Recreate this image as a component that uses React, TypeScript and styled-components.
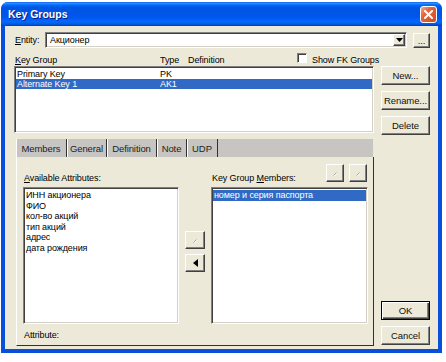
import React from "react";
import styled, { createGlobalStyle, css } from "styled-components";

const FONT = `"Liberation Sans", Arial, sans-serif`;

const Global = createGlobalStyle`
  html, body { margin: 0; padding: 0; background: #fff; }
  body { font-family: ${FONT}; font-size: 9px; letter-spacing: -0.1px; color: #000; }
  * { box-sizing: border-box; }
`;

const Window = styled.div`
  margin: 2px 0 0 1px;
  width: 441px;
  height: 351px;
  background: #0A4FDA;
  border-radius: 7px 7px 0 0;
  padding: 0 4px 4px;
  display: flex;
  flex-direction: column;
`;

const TitleBar = styled.div`
  margin: 0 -4px;
  height: 24px;
  flex: none;
  border-radius: 7px 7px 0 0;
  background: linear-gradient(to bottom, #0058EE 0%, #3593FF 5%, #127DFF 9%, #036FFC 12%, #0262EE 16%, #0057E5 22%, #0054E3 30%, #0055EB 60%, #005BF5 70%, #026AFE 80%, #0062EF 88%, #0052D6 94%, #0040AB 100%);
  display: flex;
  align-items: center;
  justify-content: space-between;
  padding: 0 5px 0 7px;
`;

const TitleText = styled.span`
  font-family: ${FONT};
  font-weight: bold;
  font-size: 10.5px;
  letter-spacing: 0;
  color: #fff;
  text-shadow: 1px 1px #0A1F80;
`;

const CloseBtn = styled.div`
  width: 17px;
  height: 17px;
  border: 1px solid #fff;
  border-radius: 3px;
  background: linear-gradient(135deg, #F4A88C 0%, #E5643C 35%, #D24C22 100%);
  display: flex;
  align-items: center;
  justify-content: center;
`;

const Body = styled.div`
  flex: 1;
  background: #ECE9D8;
  display: flex;
  flex-direction: column;
`;

const EntityRow = styled.div`
  margin-top: 6px;
  height: 16px;
  display: flex;
  align-items: center;
  padding-left: 10px;
`;

const Label = styled.span<{ $w?: number }>`
  display: inline-block;
  ${p => p.$w !== undefined && css`width: ${p.$w}px;`}
  white-space: nowrap;
`;

const Mn = styled.span`
  text-decoration: underline;
`;

const sunken = css`
  background: #fff;
  border: 1px solid;
  border-color: #808080 #fff #fff #808080;
  box-shadow: inset 1px 1px #404040, inset -1px -1px #D4D0C8;
  padding: 1px;
`;

const Combo = styled.div`
  ${sunken};
  width: 362px;
  height: 16px;
  display: flex;
  align-items: center;
  justify-content: space-between;
`;

const ComboText = styled.span`
  padding-left: 3px;
`;

const raised = css`
  background: #ECE9D8;
  border: 1px solid;
  border-color: #fff #404040 #404040 #fff;
  box-shadow: inset -1px -1px #808080;
`;

const ComboArrow = styled.div`
  ${raised};
  width: 12px;
  height: 12px;
  display: flex;
  align-items: center;
  justify-content: center;
`;

const Btn = styled.div<{ $w?: number; $h?: number; $default?: boolean }>`
  ${raised};
  width: ${p => p.$w ?? 49}px;
  height: ${p => p.$h ?? 19}px;
  flex: none;
  display: flex;
  align-items: center;
  justify-content: center;
  font-size: 9.5px;
  color: #111;
  ${p => p.$default && css`
    border-color: #000;
    box-shadow: inset 1px 1px #fff, inset -1px -1px #404040, inset -2px -2px #808080;
  `}
`;

const Main = styled.div`
  flex: 1;
  display: grid;
  grid-template-columns: 360px 49px;
  column-gap: 7px;
  padding: 5px 0 3px 9px;
`;

const LeftCol = styled.div`
  display: flex;
  flex-direction: column;
`;

const HeaderRow = styled.div`
  height: 13px;
  display: grid;
  grid-template-columns: 145px 28px 109px 15px auto;
  align-items: center;
  padding-left: 1px;
`;

const CheckBox = styled.div`
  width: 10px;
  height: 10px;
  margin-top: -3px;
  background: #fff;
  border: 1px solid;
  border-color: #808080 #fff #fff #808080;
  box-shadow: inset 1px 1px #404040;
`;

const KeyList = styled.div`
  ${sunken};
  height: 67px;
  padding-top: 2px;
`;

const KeyRow = styled.div<{ $sel?: boolean }>`
  height: 10px;
  line-height: 10px;
  display: grid;
  grid-template-columns: 143px auto;
  padding-left: 1px;
  background: ${p => (p.$sel ? "#316AC5" : "transparent")};
  color: ${p => (p.$sel ? "#fff" : "#000")};
`;

const TabStrip = styled.div`
  margin: 6px 0 0 2px;
  width: 357px;
  height: 18px;
  background: #C6C5C1;
  display: flex;
`;

const Tab = styled.div<{ $w: number }>`
  width: ${p => p.$w}px;
  height: 18px;
  display: flex;
  align-items: center;
  justify-content: center;
  border-right: 1px solid #303030;
  box-shadow: inset 1px 0 #fff;
  color: #222;
  font-size: 9.5px;
`;

const Panel = styled.div`
  margin-left: 2px;
  width: 358px;
  height: 189px;
  border-left: 1px solid #fff;
  border-right: 1px solid #303030;
  border-bottom: 1px solid #303030;
  display: grid;
  grid-template-columns: 156px 20px 157px;
  grid-template-rows: 23px 137px 1fr;
  column-gap: 6px;
  padding: 7px 5px 0 6px;
`;

const HeadCell = styled.div`
  display: flex;
  align-items: flex-end;
  justify-content: space-between;
  padding: 0 1px 4px 1px;
`;

const SmallBtns = styled.div`
  display: flex;
  gap: 5px;
  align-self: flex-start;
`;

const AttrList = styled.div`
  ${sunken};
  padding-top: 2px;
`;

const AttrItem = styled.div<{ $sel?: boolean }>`
  height: 10.6px;
  line-height: 10.6px;
  padding-left: 1px;
  white-space: nowrap;
  background: ${p => (p.$sel ? "#316AC5" : "transparent")};
  color: ${p => (p.$sel ? "#fff" : "#000")};
`;

const MidCol = styled.div`
  display: flex;
  flex-direction: column;
  justify-content: center;
  gap: 5px;
  padding-bottom: 8px;
`;

const AttrRow = styled.div`
  grid-column: 1 / -1;
  display: flex;
  align-items: center;
  padding-left: 1px;
`;

const RightCol = styled.div`
  display: flex;
  flex-direction: column;
  gap: 6px;
  padding-top: 13px;
  padding-bottom: 1px;
`;

const Spacer = styled.div`
  flex: 1;
`;

const Slash = () => (
  <svg width="8" height="8" viewBox="0 0 8 8">
    <line x1="2.5" y1="6.5" x2="5.5" y2="3.5" stroke="#A8A8A0" strokeWidth="1" />
    <line x1="3.5" y1="7" x2="6" y2="4.5" stroke="#fff" strokeWidth="1" />
  </svg>
);

export default function App() {
  return (
    <>
      <Global />
      <Window>
        <TitleBar>
          <TitleText>Key Groups</TitleText>
          <CloseBtn>
            <svg width="9" height="9" viewBox="0 0 9 9">
              <path d="M1 1 L8 8 M8 1 L1 8" stroke="#fff" strokeWidth="2" strokeLinecap="square" />
            </svg>
          </CloseBtn>
        </TitleBar>
        <Body>
          <EntityRow>
            <Label $w={30}><Mn>E</Mn>ntity:</Label>
            <Combo>
              <ComboText>Акционер</ComboText>
              <ComboArrow>
                <svg width="7" height="4" viewBox="0 0 7 4"><polygon points="0,0 7,0 3.5,4" fill="#000" /></svg>
              </ComboArrow>
            </Combo>
            <Btn $w={17} $h={15} style={{ marginLeft: 6 }}>...</Btn>
          </EntityRow>
          <Main>
            <LeftCol>
              <HeaderRow>
                <Label><Mn>K</Mn>ey Group</Label>
                <Label>Type</Label>
                <Label>Definition</Label>
                <CheckBox />
                <Label>Show FK Groups</Label>
              </HeaderRow>
              <KeyList>
                <KeyRow><span>Primary Key</span><span>PK</span></KeyRow>
                <KeyRow $sel><span>Alternate Key 1</span><span>AK1</span></KeyRow>
              </KeyList>
              <TabStrip>
                <Tab $w={51}>Members</Tab>
                <Tab $w={40}>General</Tab>
                <Tab $w={50}>Definition</Tab>
                <Tab $w={30}>Note</Tab>
                <Tab $w={31}>UDP</Tab>
              </TabStrip>
              <Panel>
                <HeadCell>
                  <Label><Mn>A</Mn>vailable Attributes:</Label>
                </HeadCell>
                <div />
                <HeadCell>
                  <Label>Key Group <Mn>M</Mn>embers:</Label>
                  <SmallBtns>
                    <Btn $w={18} $h={18}><Slash /></Btn>
                    <Btn $w={18} $h={18}><Slash /></Btn>
                  </SmallBtns>
                </HeadCell>
                <AttrList>
                  <AttrItem>ИНН акционера</AttrItem>
                  <AttrItem>ФИО</AttrItem>
                  <AttrItem>кол-во акций</AttrItem>
                  <AttrItem>тип акций</AttrItem>
                  <AttrItem>адрес</AttrItem>
                  <AttrItem>дата рождения</AttrItem>
                </AttrList>
                <MidCol>
                  <Btn $w={20} $h={18}><Slash /></Btn>
                  <Btn $w={20} $h={18}>
                    <svg width="5" height="8" viewBox="0 0 5 8"><polygon points="5,0 5,8 0,4" fill="#000" /></svg>
                  </Btn>
                </MidCol>
                <AttrList>
                  <AttrItem $sel>номер и серия паспорта</AttrItem>
                </AttrList>
                <AttrRow>Attribute:</AttrRow>
              </Panel>
            </LeftCol>
            <RightCol>
              <Btn>New...</Btn>
              <Btn>Rename...</Btn>
              <Btn>Delete</Btn>
              <Spacer />
              <Btn $default>OK</Btn>
              <Btn>Cancel</Btn>
            </RightCol>
          </Main>
        </Body>
      </Window>
    </>
  );
}
